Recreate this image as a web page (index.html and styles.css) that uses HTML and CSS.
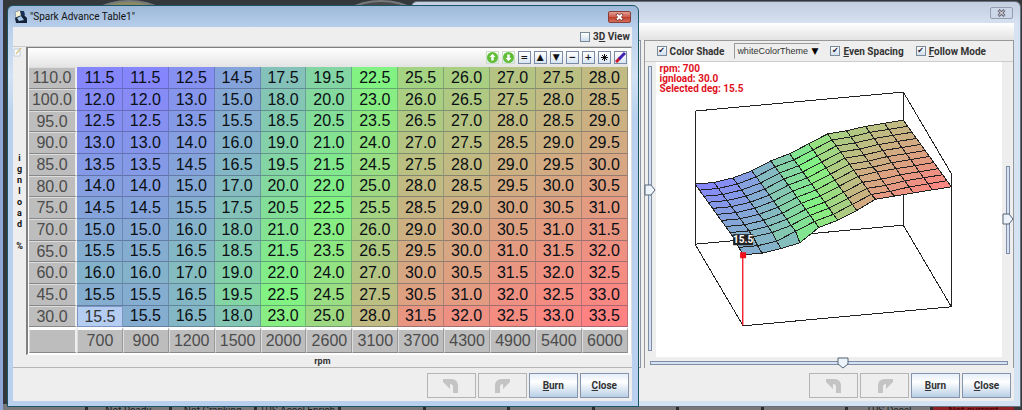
FILE: index.html
```html
<!DOCTYPE html>
<html lang="en">
  <head>
    <meta charset="UTF-8" />
    <meta name="viewport" content="width=device-width, initial-scale=1.0" />
    <title>Spark Advance Table1</title>
    <link rel="stylesheet" href="styles.css">
  </head>
  <body>
    <div class="desktop">
      <div class="gauges">
        <div class="gauge"></div>
        <div class="gauge"></div>
      </div>
      <div class="indicators">
        <span></span>
        <span>Not Ready</span>
        <span>Not Cranking</span>
        <span>TPS Accel Enrich</span>
        <span></span>
        <span></span>
        <span></span>
        <span></span>
        <span></span>
        <span></span>
        <span>TPS Decel</span>
        <span class="alert">Not current</span>
      </div>

      <section class="window back">
        <header class="titlebar">
          <button class="close-btn" aria-label="Close window">
            <svg width="9" height="8" viewBox="0 0 9 8"><path d="M1.5 1l6 6M7.5 1l-6 6" stroke="#667" stroke-width="3" /><path d="M2 1.500l5 5M7 1.500l-5 5" stroke="#fff" stroke-width="1" /></svg>
          </button>
        </header>
        <div class="menu-strip"></div>
        <div class="window-body">
          <div class="split">
            <div class="left-pane"></div>
            <div class="view3d">
              <div class="options">
                <label><input type="checkbox" checked />Color Shade</label>
                <div class="select-wrap">
                  <select aria-label="Color theme">
                    <option>whiteColorTheme</option>
                  </select>
                </div>
                <label><input type="checkbox" checked /><span><u>E</u>ven Spacing</span></label>
                <label><input type="checkbox" checked /><span><u>F</u>ollow Mode</span></label>
              </div>
              <div class="stage">
                <input class="slider vertical pitch" type="range" min="0" max="100" value="57" aria-label="Pitch" />
                <div class="plot-wrap">
                  <svg id="plot" viewBox="657 61 346 295"></svg>
                  <div class="readout">
                    <div>rpm: 700</div>
                    <div>ignload: 30.0</div>
                    <div>Selected deg: 15.5</div>
                  </div>
                </div>
                <input class="slider vertical zoom" type="range" min="0" max="100" value="37" aria-label="Zoom" />
              </div>
              <input class="slider horizontal" type="range" min="0" max="100" value="54" aria-label="Yaw" />
            </div>
          </div>
          <div class="actions">
            <button disabled aria-label="Undo"><svg width="18" height="18" viewBox="0 0 18 18"><path d="M1 2h8c5 0 7 3 7 7v7h-5v-6c0-2-1-3-3-3v5L1 5z" /></svg></button>
            <button disabled aria-label="Redo"><svg width="18" height="18" viewBox="0 0 18 18"><path d="M17 2H9c-5 0-7 3-7 7v7h5v-6c0-2 1-3 3-3v5l7-7z" /></svg></button>
            <button><span><u>B</u>urn</span></button>
            <button><span><u>C</u>lose</span></button>
          </div>
        </div>
      </section>

      <section class="window front">
        <header class="titlebar">
          <svg class="app-icon" width="13" height="13" viewBox="0 0 13 13">
            <path d="M1 2l6-2 1 7-6 2z" fill="#f6f3d4" stroke="#8a9ab0" />
            <path d="M6 1h4l1 4-4 1z" fill="#17335c" />
            <path d="M1 8c3-2 7-3 9-3l3 3v5H2z" fill="#14233a" />
            <path d="M3 8l4-2 3 4-5 1z" fill="#a8c8e8" />
          </svg>
          <h1>"Spark Advance Table1"</h1>
          <button class="close-btn" aria-label="Close window">
            <svg width="9" height="8" viewBox="0 0 9 8"><path d="M1.500 1l6 6M7.500 1l-6 6" stroke="#6b2a22" stroke-width="3" /><path d="M2 1.500l5 5M7 1.500l-5 5" stroke="#fff" stroke-width="2" /></svg>
          </button>
        </header>
        <div class="window-body">
          <div class="view-toggle">
            <label><input type="checkbox" /><span>3<u>D</u> View</span></label>
          </div>
          <div class="editor">
            <div class="y-axis">
              <svg width="10" height="10" viewBox="0 0 10 10"><path d="M1 2h6v7H1z" fill="#fff" stroke="#bcd" /><path d="M3 7l5-6" fill="none" stroke="#d8c890" stroke-width="1.500" /></svg>
              <div class="y-name">
                <span>i</span><span>g</span><span>n</span><span>l</span><span>o</span><span>a</span><span>d</span><span></span><span>%</span>
              </div>
            </div>
            <div class="grid-panel">
              <div class="tools">
                <button class="round" aria-label="Increase"><svg width="13" height="13" viewBox="0 0 13 13"><circle cx="6.500" cy="6.500" r="6.500" fill="#62bd37" /><path d="M6.500 2L3 6h2v4h3V6h2z" fill="#fff" /></svg></button>
                <button class="round" aria-label="Decrease"><svg width="13" height="13" viewBox="0 0 13 13"><circle cx="6.500" cy="6.500" r="6.500" fill="#62bd37" /><path d="M6.500 11L3 7h2V3h3v4h2z" fill="#fff" /></svg></button>
                <button>=</button>
                <button>▲</button>
                <button>▼</button>
                <button>−</button>
                <button>+</button>
                <button aria-label="Multiply"><svg width="9" height="9" viewBox="0 0 9 9"><path d="M4.500 1v7M1 4.500h7M2 2l5 5M7 2L2 7" stroke="#111" /></svg></button>
                <button aria-label="Interpolate"><svg width="11" height="11" viewBox="0 0 11 11"><path d="M1 10l4-4" stroke="#d01828" stroke-width="3" /><path d="M4 7l6-6" stroke="#4020b0" stroke-width="3" /></svg></button>
              </div>
              <table class="spark-table">
                <tbody id="cells"></tbody>
                <tfoot><tr id="rpm-row"><th></th></tr></tfoot>
              </table>
            </div>
          </div>
          <div class="x-name">rpm</div>
          <div class="actions">
            <button disabled aria-label="Undo"><svg width="18" height="18" viewBox="0 0 18 18"><path d="M1 2h8c5 0 7 3 7 7v7h-5v-6c0-2-1-3-3-3v5L1 5z" /></svg></button>
            <button disabled aria-label="Redo"><svg width="18" height="18" viewBox="0 0 18 18"><path d="M17 2H9c-5 0-7 3-7 7v7h5v-6c0-2 1-3 3-3v5l7-7z" /></svg></button>
            <button><span><u>B</u>urn</span></button>
            <button><span><u>C</u>lose</span></button>
          </div>
        </div>
      </section>
    </div>

    <script src="script.js"></script>
  </body>
</html>
```
FILE: styles.css
```css
* {
  box-sizing: border-box;
}
body {
  margin: 0;
  font-family: Roboto, "Liberation Sans", sans-serif;
  font-size: 10px;
  font-weight: bold;
  color: #333;
}
button, select, input {
  font: inherit;
  color: inherit;
  margin: 0;
}
button {
  padding: 0;
  display: flex;
  align-items: center;
  justify-content: center;
}

/* desktop behind the windows */
.desktop {
  position: relative;
  display: grid;
  align-items: start;
  min-height: 100vh;
  overflow: hidden;
  background: #34383b;
  border-left: 3px solid #8fa6d6;
}
.gauges {
  position: absolute;
  top: 0;
  left: 78px;
  display: flex;
  gap: 156px;
}
.gauge {
  width: 96px;
  height: 60px;
  border-radius: 50%;
  background: #8b8b62;
  border: 2px solid #77787a;
}
.gauge:last-child {
  background: #4a4a48;
}
.indicators {
  position: absolute;
  left: 0;
  right: 8px;
  bottom: 0;
  height: 6px;
  display: flex;
  gap: 3px;
  overflow: hidden;
  background: #2c2c2c;
}
.indicators span {
  flex: 1 1 0;
  height: 20px;
  line-height: 14px;
  font-size: 10px;
  font-weight: normal;
  text-align: center;
  white-space: nowrap;
  color: #1c1c1c;
  background: #79797b;
}
.indicators .alert {
  background: #8c2226;
  color: #400;
}

/* windows */
.window {
  grid-area: 1 / 1;
  position: relative;
  border: 1px solid #1d5566;
  border-radius: 6px 6px 0 0;
}
.front {
  width: 62%;
  margin: 5px 0 0 4px;
  padding: 0 6px 5px 5px;
  background: linear-gradient(#9db8d8, #b9d0ec 22px, #d3e2f4 70px, #b9d1ee 110px);
}
.back {
  margin: 1px 1px 0 40%;
  padding: 0 6px 5px 5px;
  border-color: #66707c;
  background: linear-gradient(#c3cfe0, #d6e2f2 22px, #d3e3f3);
}
.titlebar {
  display: flex;
  align-items: center;
  height: 21px;
  padding: 0 1px;
}
.titlebar h1 {
  flex: 1;
  margin: 0;
  padding-left: 3px;
  font-size: 10px;
  font-weight: normal;
  color: #111;
}
.close-btn {
  width: 23px;
  height: 12px;
  border: 1px solid #8b3b35;
  border-radius: 2px;
  background: linear-gradient(#e0a196, #cf5a49 50%, #bd3b2b 51%, #d2705a);
}
.back .titlebar {
  justify-content: flex-end;
}
.back .close-btn {
  border-color: #929eb0;
  background: #ccd8e8;
}
.window-body {
  background: #eee;
}
.menu-strip {
  height: 17px;
  background: linear-gradient(#fff, #e2e2e2);
}

/* check boxes */
label {
  display: flex;
  align-items: center;
  white-space: nowrap;
}
input[type="checkbox"] {
  appearance: none;
  width: 10px;
  height: 10px;
  margin-right: 3px;
  border: 1px solid #7a8a99;
  background: linear-gradient(#fff, #cfdeee);
}
input[type="checkbox"]:checked::before {
  content: "✔";
  display: block;
  font-family: "DejaVu Sans", sans-serif;
  font-size: 8px;
  line-height: 8px;
  text-align: center;
  color: #223;
}

/* table editor */
.view-toggle {
  display: flex;
  justify-content: flex-end;
  height: 20px;
  padding-right: 2px;
  border-bottom: 1px solid #ccc;
}
.editor {
  display: flex;
}
.y-axis {
  width: 13px;
}
.y-name {
  display: flex;
  flex-direction: column;
  align-items: center;
  margin-top: 94px;
  font-size: 9px;
  line-height: 11px;
  color: #111;
}
.y-name span {
  height: 11px;
}
.grid-panel {
  flex: 1;
  padding: 0 3px 1px 1px;
  border: 1px solid #808080;
  border-left-width: 2px;
  border-right-color: #ddd;
  border-bottom-color: #fff;
  background: #fff;
}
.tools {
  display: flex;
  justify-content: flex-end;
  align-items: center;
  gap: 3px;
  height: 19px;
  padding-right: 1px;
  background: linear-gradient(#fff, #e4e4e4);
}
.tools button {
  width: 13px;
  height: 13px;
  border: 1px solid #7a8ba5;
  background: linear-gradient(#fff, #d8e5f2);
  color: #111;
  font-family: "DejaVu Sans", sans-serif;
  font-size: 9px;
  line-height: 9px;
}
.tools .round {
  border-color: #cde0c4;
}
.spark-table {
  width: 100%;
  border-collapse: separate;
  border-spacing: 0;
  table-layout: fixed;
  font-family: "Liberation Sans", sans-serif;
  font-size: 16px;
  line-height: 18px;
}
.spark-table th, .spark-table td {
  padding: 0;
  height: 22px;
  overflow: hidden;
  font-weight: normal;
  text-align: center;
}
.spark-table tbody tr:nth-child(3n) > * {
  height: 21px;
}
.spark-table td {
  border-right: 1px solid rgba(50, 60, 90, 0.3);
  border-bottom: 1px solid rgba(50, 60, 90, 0.4);
  color: #0a0f14;
}
.spark-table td.selected {
  background: #b4cdf0;
  border: 1px solid #7d95c4;
  color: #333;
}
.spark-table th {
  background: #bdbdbd;
  color: #4c4c4c;
  border-right: 1px solid #999;
  border-bottom: 1px solid #888;
}
.spark-table tr > th:first-child {
  width: 48px;
  border-right: 2px solid #eee;
}
.spark-table tbody th {
  border-top: 1px solid #ddd;
}
.spark-table tfoot th {
  height: 26px;
  line-height: 22px;
  border-top: 3px solid #fff;
  border-left: 1px solid #ddd;
}
.x-name {
  height: 13px;
  line-height: 12px;
  font-size: 9px;
  text-align: center;
  border-bottom: 1px solid #b5b5b5;
}

/* bottom buttons */
.actions {
  display: flex;
  justify-content: flex-end;
  gap: 2px;
  padding: 5px 3px 3px 0;
}
.actions button {
  width: 49px;
  height: 25px;
  border: 1px solid #8594aa;
  background: linear-gradient(#e6eef8, #fff 35%, #b9cfe6);
}
.actions button:disabled {
  border-color: #b4b4b4;
  background: #eee;
}
.actions svg {
  fill: #c4c4c4;
}

/* 3D view */
.split {
  display: flex;
}
.left-pane {
  flex: 1;
  margin-right: 3px;
  border: 1px solid #8c96a3;
}
.view3d {
  width: 62%;
  min-width: 370px;
  border: 1px solid #999;
  border-bottom: 0;
}
.options {
  display: flex;
  align-items: center;
  gap: 12px;
  height: 21px;
  padding-left: 12px;
  border-bottom: 1px solid #ccc;
}
.select-wrap {
  position: relative;
  margin: 0 -2px;
}
.select-wrap::after {
  content: "▼";
  position: absolute;
  right: 2px;
  top: 2px;
  font-family: "DejaVu Sans", sans-serif;
  font-size: 9px;
  line-height: 12px;
  color: #000;
  pointer-events: none;
}
select {
  appearance: none;
  width: 86px;
  height: 16px;
  padding: 0 0 0 2px;
  border: 1px solid #999;
  border-right-color: #eee;
  border-bottom-color: #eee;
  border-radius: 0;
  background: #eee;
  font-family: "Liberation Sans", sans-serif;
  font-size: 9px;
  font-weight: normal;
}
.stage {
  display: flex;
}
.plot-wrap {
  position: relative;
  flex: 1;
  background: #fff;
}
#plot {
  display: block;
  width: 100%;
}
.readout {
  position: absolute;
  top: 2px;
  left: 4px;
  line-height: 10px;
  color: #e0101c;
}

/* sliders */
.slider {
  appearance: none;
  background: none;
}
.slider::-webkit-slider-runnable-track {
  border: 1px solid #7d8ea6;
  background: #d6e2f4;
}
.slider::-webkit-slider-thumb {
  appearance: none;
  width: 12px;
  height: 12px;
}
.horizontal {
  display: block;
  width: calc(100% - 10px);
  height: 11px;
  margin: 0 5px;
}
.horizontal::-webkit-slider-runnable-track {
  height: 4px;
}
.horizontal::-webkit-slider-thumb {
  margin-top: -5px;
  background: url("data:image/svg+xml,%3Csvg xmlns='http://www.w3.org/2000/svg' width='12' height='12'%3E%3Cpath d='M1 1h10v6l-5 4-5-4z' fill='%23edf3fa' stroke='%23567'/%3E%3C/svg%3E");
}
.vertical {
  writing-mode: vertical-lr;
  direction: rtl;
  width: 11px;
}
.vertical::-webkit-slider-runnable-track {
  width: 4px;
}
.vertical::-webkit-slider-thumb {
  margin-left: -5px;
  background: url("data:image/svg+xml,%3Csvg xmlns='http://www.w3.org/2000/svg' width='12' height='12'%3E%3Cpath d='M1 1v10h6l4-5-4-5z' fill='%23edf3fa' stroke='%23567'/%3E%3C/svg%3E");
}
.pitch {
  margin: 4px 0 6px;
}
.zoom {
  height: 88px;
  align-self: center;
}
```
FILE: script.js
```js
const rpm = [700, 900, 1200, 1500, 2000, 2600, 3100, 3700, 4300, 4900, 5400, 6000];
const load = [110, 100, 95, 90, 85, 80, 75, 70, 65, 60, 45, 30];
const spark = [
  [11.5, 11.5, 12.5, 14.5, 17.5, 19.5, 22.5, 25.5, 26, 27, 27.5, 28],
  [12, 12, 13, 15, 18, 20, 23, 26, 26.5, 27.5, 28, 28.5],
  [12.5, 12.5, 13.5, 15.5, 18.5, 20.5, 23.5, 26.5, 27, 28, 28.5, 29],
  [13, 13, 14, 16, 19, 21, 24, 27, 27.5, 28.5, 29, 29.5],
  [13.5, 13.5, 14.5, 16.5, 19.5, 21.5, 24.5, 27.5, 28, 29, 29.5, 30],
  [14, 14, 15, 17, 20, 22, 25, 28, 28.5, 29.5, 30, 30.5],
  [14.5, 14.5, 15.5, 17.5, 20.5, 22.5, 25.5, 28.5, 29, 30, 30.5, 31],
  [15, 15, 16, 18, 21, 23, 26, 29, 30, 30.5, 31, 31.5],
  [15.5, 15.5, 16.5, 18.5, 21.5, 23.5, 26.5, 29.5, 30, 31, 31.5, 32],
  [16, 16, 17, 19, 22, 24, 27, 30, 30.5, 31.5, 32, 32.5],
  [15.5, 15.5, 16.5, 19.5, 22.5, 24.5, 27.5, 30.5, 31, 32, 32.5, 33],
  [15.5, 15.5, 16.5, 18, 23, 25, 28, 31.5, 32, 32.5, 33, 33.5]
];
const MIN = 11.5;
const MAX = 33.5;

// blue -> green -> red
function shade(value) {
  const t = (value - MIN) / (MAX - MIN);
  const stops = [[134, 134, 252], [130, 242, 130], [255, 130, 130]];
  const from = t < 0.5 ? stops[0] : stops[1];
  const to = t < 0.5 ? stops[1] : stops[2];
  const k = t < 0.5 ? t * 2 : t * 2 - 1;
  return 'rgb(' + from.map((c, i) => Math.round(c + (to[i] - c) * k)).join(',') + ')';
}

const cells = document.getElementById('cells');
spark.forEach((row, r) => {
  const tr = document.createElement('tr');
  const th = document.createElement('th');
  th.textContent = load[r].toFixed(1);
  tr.appendChild(th);
  row.forEach((value, c) => {
    const td = document.createElement('td');
    td.textContent = value.toFixed(1);
    if (r === 11 && c === 0) {
      td.className = 'selected';
    } else {
      td.style.backgroundColor = shade(value);
    }
    tr.appendChild(td);
  });
  cells.appendChild(tr);
});
rpm.forEach((value) => {
  const th = document.createElement('th');
  th.textContent = value;
  document.getElementById('rpm-row').appendChild(th);
});

// 3D surface
const plot = document.getElementById('plot');

function draw(tag, attrs, text) {
  const el = document.createElementNS('http://www.w3.org/2000/svg', tag);
  for (const name in attrs) el.setAttribute(name, attrs[name]);
  if (text) el.textContent = text;
  plot.appendChild(el);
}

function project(r, c, height) {
  const x = 696 + (c * 208) / 11 + (r * 48) / 11;
  const y = 243 - (c * 19) / 11 + (r * 81.5) / 11 - height;
  return x.toFixed(1) + ',' + y.toFixed(1);
}

function point(r, c) {
  return project(r, c, 60 + (spark[r][c] - MIN) * 2.72);
}

const line = { fill: 'none', stroke: '#222', 'shape-rendering': 'crispEdges' };
const H = 133;
draw('polygon', { ...line, points: [project(0, 0, 0), project(0, 11, 0), project(11, 11, 0), project(11, 0, 0)].join(' ') });
draw('polyline', { ...line, points: [project(0, 0, 0), project(0, 0, H), project(0, 11, H), project(11, 11, H), project(11, 11, 0)].join(' ') });
draw('polyline', { ...line, points: [project(0, 11, H), project(0, 11, 0)].join(' ') });

for (let r = 0; r < 11; r++) {
  for (let c = 0; c < 11; c++) {
    draw('polygon', {
      ...line,
      fill: shade((spark[r][c] + spark[r + 1][c + 1]) / 2),
      points: [point(r, c), point(r, c + 1), point(r + 1, c + 1), point(r + 1, c)].join(' ')
    });
  }
}

// selected cell: stem, marker and value
draw('rect', { x: 743, y: 254, width: 1.3, height: 70, fill: '#f0101c' });
draw('rect', { x: 741, y: 251, width: 6, height: 6, fill: '#f0101c' });
draw('rect', { x: 734, y: 233, width: 20, height: 11, fill: '#222' });
draw('text', { x: 744, y: 242, fill: '#fff', 'font-size': 10, 'text-anchor': 'middle' }, '15.5');
```
